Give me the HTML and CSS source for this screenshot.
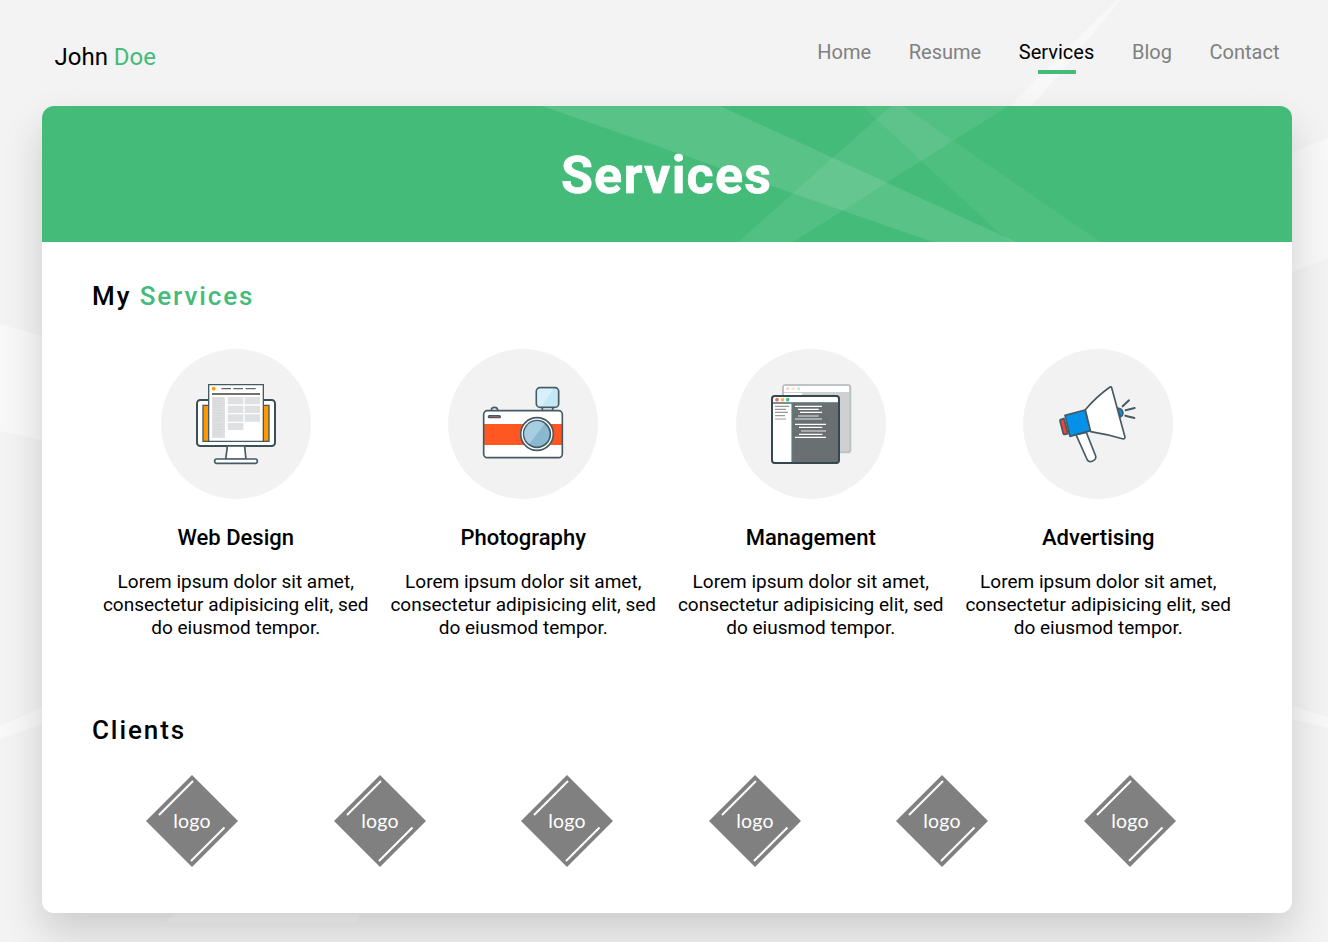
FILE: index.html
```html
<!DOCTYPE html>
<html lang="en">
<head>
<meta charset="utf-8">
<title>John Doe - Services</title>
<link rel="stylesheet" href="styles.css">
</head>
<body>
<svg class="backdrop" viewBox="0 0 1328 942" fill="#fff" fill-opacity=".4" aria-hidden="true">
  <path d="M1117 0h4L1032 106h-23zM1292 153l36-15.500v120.500l-36 14zM1292 706l36 11v11l-36-9zM0 324l42 12v104L0 431zM0 726l42-18.500V724L0 739z"/>
  <path fill-opacity=".32" d="M177 912h185l-7 11H165z"/>
</svg>
<header class="topbar">
  <a class="brand">John <span class="accent">Doe</span></a>
  <nav class="nav">
    <a class="nav-link">Home</a>
    <a class="nav-link">Resume</a>
    <a class="nav-link active">Services</a>
    <a class="nav-link">Blog</a>
    <a class="nav-link">Contact</a>
  </nav>
</header>
<main class="card">
  <div class="banner">
    <svg class="beams" viewBox="0 0 1250 136" fill="#fff" aria-hidden="true">
      <path fill-opacity=".11" d="M500 0h178l296 136h-83z"/>
      <path fill-opacity=".08" d="M849 0h117L751 136h-55z"/>
      <path fill-opacity=".06" d="M820 0h41l197 136h-91z"/>
    </svg>
    <h1 class="banner-title">Services</h1>
  </div>
  <section class="services">
    <h2 class="heading">My <span class="accent">Services</span></h2>
    <div class="service-grid">
      <article class="service">
        <div class="disc"><svg class="icon" viewBox="0 0 300 300">
          <rect x="33" y="78" width="234" height="138" rx="10" fill="#fff" stroke="#3b4f59" stroke-width="6"/>
          <path d="M51 94h198v108H51z" fill="#ff9800" stroke="#455a64" stroke-width="4"/>
          <path d="M124 218l-5 38h61l-4-38" fill="#fff" stroke="#455a64" stroke-width="5"/>
          <rect x="86" y="255" width="128" height="13" rx="6" fill="#fff" stroke="#455a64" stroke-width="5"/>
          <path d="M68 32h164v170H68z" fill="#fff" stroke="#455a64" stroke-width="4"/>
          <circle cx="83" cy="44" r="5.500" fill="#ff9800"/>
          <path d="M106 44h29M142 44h29M179 44h30" stroke="#666" stroke-width="4"/>
          <path d="M78 60h144" stroke="#707070" stroke-width="6"/>
          <path d="M78 69h39v123H78zM125 69h47v22h-47zM176 69h46v22h-46zM125 95h47v22h-47zM176 95h46v22h-46zM125 121h47v22h-47zM176 121h46v22h-46zM125 147h47v21h-47z" fill="#dfe0e1"/>
          <path d="M81 74h33M81 81h30M81 88h32M81 95h31M81 101h26M81 108h31M81 118h33M81 125h30M81 133h33M81 140h26M81 151h33M81 158h30M81 166h32M81 174h30M81 181h25" stroke="#d0d1d3" stroke-width="2"/>
        </svg></div>
        <h3 class="service-title">Web Design</h3>
        <p class="service-text">Lorem ipsum dolor sit amet, consectetur adipisicing elit, sed do eiusmod tempor.</p>
      </article>
      <article class="service">
        <div class="disc"><svg class="icon" viewBox="0 0 300 300">
          <path d="M208 98v12h31V98M55 109c0-12 19-12 19 0" fill="#fff" stroke="#455a64" stroke-width="5"/>
          <rect x="190" y="41" width="67" height="59" rx="11" fill="#c5e8f5" stroke="#455a64" stroke-width="5"/>
          <path d="M201 44h40l-34 52c-8 0-14-3-14-10V52c0-5 3-8 8-8z" fill="#d8f0f9"/>
          <rect x="32" y="110" width="236" height="141" rx="11" fill="#fff"/>
          <path d="M32 150h236v63H32z" fill="#ff5722"/>
          <rect x="32" y="110" width="236" height="141" rx="11" fill="none" stroke="#455a64" stroke-width="5"/>
          <rect x="46" y="125" width="36" height="6" rx="3" fill="#c85b5b" stroke="#455a64" stroke-width="4"/>
          <circle cx="192" cy="180" r="49" fill="#fff" stroke="#455a64" stroke-width="5"/>
          <circle cx="192" cy="180" r="40" fill="#8ab8ce" stroke="#455a64" stroke-width="5"/>
          <path d="M215 149a38 38 0 0 0-46 61z" fill="#a6cde0"/>
        </svg></div>
        <h3 class="service-title">Photography</h3>
        <p class="service-text">Lorem ipsum dolor sit amet, consectetur adipisicing elit, sed do eiusmod tempor.</p>
      </article>
      <article class="service">
        <div class="disc"><svg class="icon" viewBox="0 0 300 300">
          <rect x="66" y="33" width="202" height="202" rx="8" fill="#cfd0d1" stroke="#bdc2c5" stroke-width="6"/>
          <path d="M69 36h195v18H69zM69 57h54v10H69z" fill="#fff"/>
          <circle cx="80" cy="44" r="5" fill="#ffd0d0"/><circle cx="97" cy="44" r="5" fill="#fce6c5"/><circle cx="113" cy="44" r="5" fill="#c3ecdc"/>
          <rect x="33" y="66" width="201" height="201" rx="8" fill="#6a6f71"/>
          <path d="M35 68h197v18H35zM35 88h57v177H35z" fill="#fff"/>
          <path d="M35 87h197M94 87v178" stroke="#60777b" stroke-width="4"/>
          <rect x="33" y="66" width="201" height="201" rx="8" fill="none" stroke="#37474f" stroke-width="6"/>
          <circle cx="48" cy="77" r="5.500" fill="#ff6464"/><circle cx="65" cy="77" r="5.500" fill="#f5b94c"/><circle cx="80" cy="77" r="5.500" fill="#3fc893"/>
          <path d="M42 97h43M42 106h33M42 115h39M42 125h30M42 135h33" stroke="#999" stroke-width="3.500"/>
          <path d="M102 97h81M111 106h62M117 115h66M102 151h93M114 160h70M114 181h70M102 190h93" stroke="#fff" stroke-width="3.500"/>
          <path d="M111 126h62M102 135h81M120 171h75" stroke="#bfc1c2" stroke-width="5"/>
        </svg></div>
        <h3 class="service-title">Management</h3>
        <p class="service-text">Lorem ipsum dolor sit amet, consectetur adipisicing elit, sed do eiusmod tempor.</p>
      </article>
      <article class="service">
        <div class="disc"><svg class="icon" viewBox="0 0 300 300" stroke="#455a64" stroke-width="5" stroke-linejoin="round">
          <path d="M84 182l31-7 28 71c3 14-18 22-25 12z" fill="#fff"/>
          <path d="M208 102c18 1 22 20 9 27z" fill="#0590ea"/>
          <path d="M48 134l-11 3q-2 1-1 4l10 38q1 3 4 2l10-2z" fill="#f44336"/>
          <path d="M51 124l60-16 17 62-62 17z" fill="#0590ea"/>
          <path d="M112 107q32-38 74-68 4-1 5 2l40 149q-1 5-5 5-48-14-98-22z" fill="#fff"/>
          <path d="M224 97l19-18M233 109l27-7M232 125l27 7" fill="none" stroke-width="6" stroke-linecap="round"/>
        </svg></div>
        <h3 class="service-title">Advertising</h3>
        <p class="service-text">Lorem ipsum dolor sit amet, consectetur adipisicing elit, sed do eiusmod tempor.</p>
      </article>
    </div>
  </section>
  <section class="clients">
    <h2 class="heading">Clients</h2>
    <svg class="defs" width="0" height="0"><defs><g id="diamond">
      <path d="M46 0l46 46-46 46L0 46z" fill="#808080"/>
      <path d="M13 40L47 6M45 86L78.500 52.500" stroke="#fff" stroke-width="2"/>
    </g></defs></svg>
    <div class="client-row">
      <div class="client"><svg class="client-logo" viewBox="0 0 92 92"><use href="#diamond"/><text x="46" y="52.500">logo</text></svg></div>
      <div class="client"><svg class="client-logo" viewBox="0 0 92 92"><use href="#diamond"/><text x="46" y="52.500">logo</text></svg></div>
      <div class="client"><svg class="client-logo" viewBox="0 0 92 92"><use href="#diamond"/><text x="46" y="52.500">logo</text></svg></div>
      <div class="client"><svg class="client-logo" viewBox="0 0 92 92"><use href="#diamond"/><text x="46" y="52.500">logo</text></svg></div>
      <div class="client"><svg class="client-logo" viewBox="0 0 92 92"><use href="#diamond"/><text x="46" y="52.500">logo</text></svg></div>
      <div class="client"><svg class="client-logo" viewBox="0 0 92 92"><use href="#diamond"/><text x="46" y="52.500">logo</text></svg></div>
    </div>
  </section>
</main>
</body>
</html>
```
FILE: styles.css
```css
* { box-sizing: border-box; }
html { height: 100%; }
body {
  margin: 0;
  height: 942px;
  overflow: hidden;
  background: #f3f3f3;
  color: #000;
  font-family: Roboto, sans-serif;
}
h1, h2, h3, p { margin: 0; }
.accent { color: #45bb79; }
.backdrop {
  position: absolute;
  inset: 0;
  width: 1328px;
  height: 942px;
  z-index: -1;
}
.topbar {
  display: flex;
  justify-content: space-between;
  align-items: flex-start;
  height: 106px;
  padding: 40px 48.5px 0 54.5px;
}
.brand { font-size: 24px; line-height: 34px; }
.nav { display: flex; gap: 37.7px; }
.nav-link {
  display: flex;
  flex-direction: column;
  align-items: center;
  font-size: 20px;
  line-height: 24px;
  color: #808080;
}
.nav-link.active { color: #000; }
.nav-link.active::after {
  content: "";
  width: 38px;
  height: 4px;
  margin-top: 6px;
  background: #45bb79;
}
.card {
  width: 1250px;
  height: 807px;
  margin-left: 42px;
  border-radius: 12px;
  overflow: hidden;
  background: #fff;
  box-shadow: 0 20px 40px rgba(0, 0, 0, .16);
}
.banner {
  display: grid;
  place-items: center;
  height: 136px;
  background: #45bb79;
}
.beams, .banner-title { grid-area: 1 / 1; }
.beams { width: 1250px; height: 136px; }
.banner-title {
  z-index: 1;
  padding: 3px 1px 0 0;
  color: #fff;
  font-size: 52px;
  font-weight: 700;
  line-height: 64px;
  letter-spacing: 1.2px;
  -webkit-text-stroke: .6px #fff;
}
.services { padding: 38px 50px 0; }
.heading {
  font-size: 26px;
  font-weight: 500;
  line-height: 32px;
  letter-spacing: 1.9px;
}
.service-grid {
  display: grid;
  grid-template-columns: repeat(4, 1fr);
  margin-top: 37px;
}
.service {
  display: flex;
  flex-direction: column;
  align-items: center;
  text-align: center;
}
.disc {
  display: grid;
  place-items: center;
  width: 150px;
  height: 150px;
  border-radius: 50%;
  background: #f2f2f2;
}
.icon { width: 100px; height: 100px; }
.service-title {
  margin-top: 25px;
  font-size: 22px;
  font-weight: 500;
  line-height: 28px;
}
.service-text {
  width: 272px;
  margin-top: 18px;
  font-size: 19px;
  line-height: 23px;
}
.clients { padding: 75px 50px 0; }
.defs { display: block; }
.client-row {
  display: grid;
  grid-template-columns: repeat(6, 187.5px);
  margin: 29px 0 0 6.5px;
}
.client { display: flex; justify-content: center; }
.client-logo { width: 92px; height: 92px; }
.client-logo text {
  fill: #fff;
  font-family: Lato, sans-serif;
  font-size: 19.5px;
  letter-spacing: .2px;
  text-anchor: middle;
}
```
